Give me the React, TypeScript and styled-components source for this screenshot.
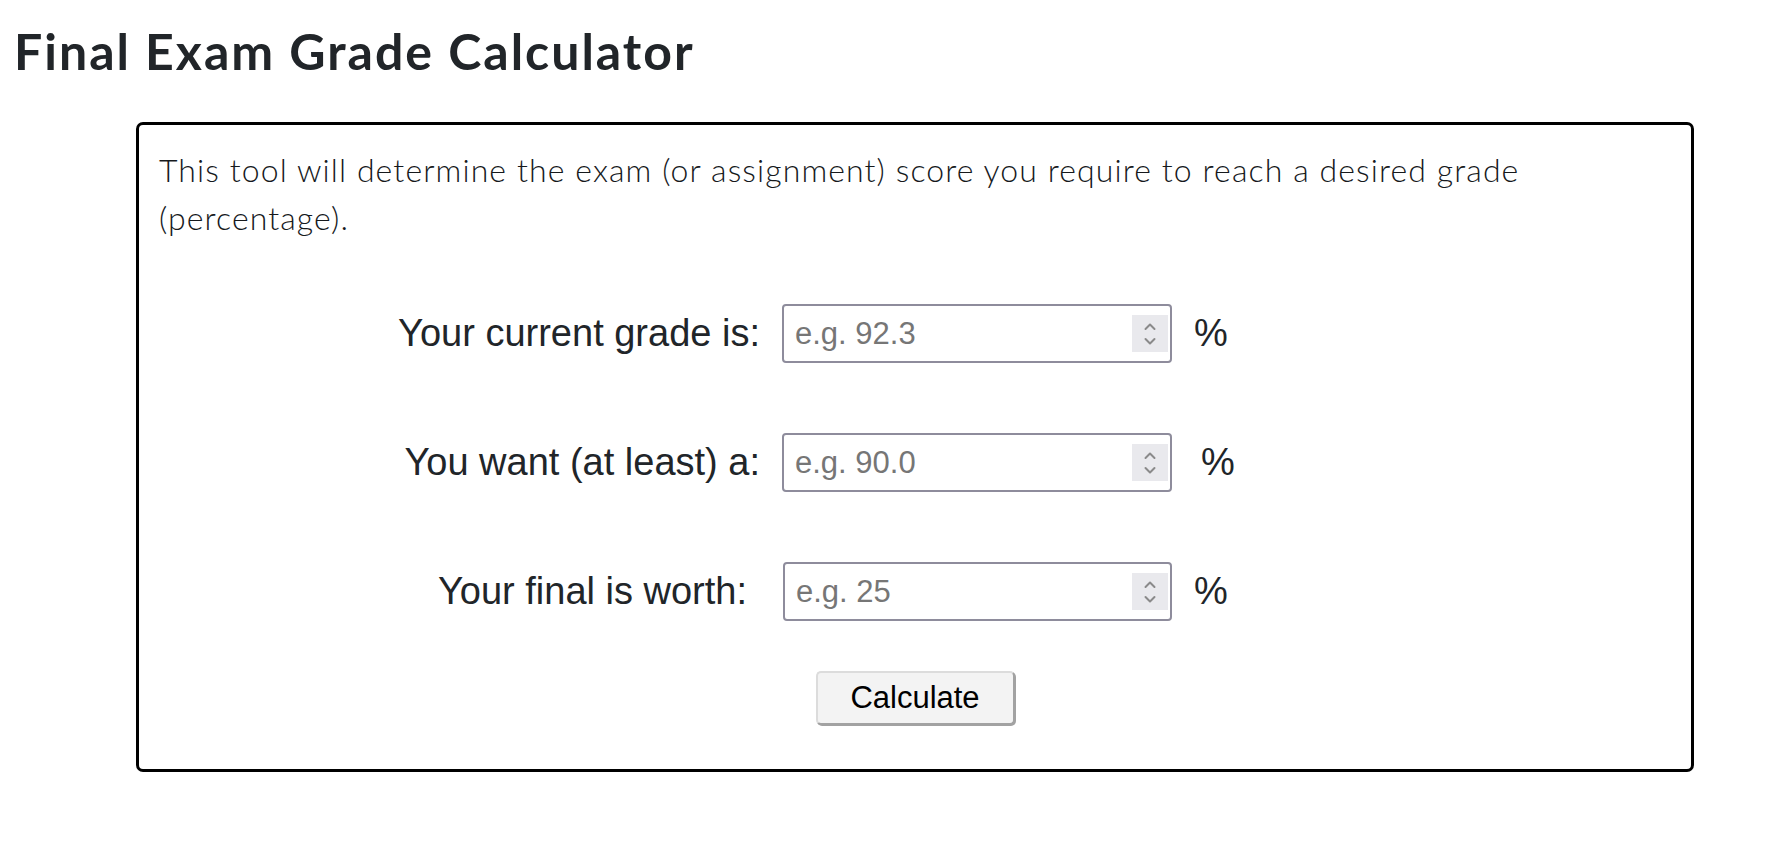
import React from "react";
import styled, { createGlobalStyle } from "styled-components";

const Global = createGlobalStyle`
  html, body { margin: 0; padding: 0; background: #ffffff; }
  body { font-family: "Liberation Sans", Arial, sans-serif; color: #212529; }
  * { box-sizing: border-box; }
`;

const Page = styled.div`
  width: 1778px;
  min-height: 842px;
  padding: 21px 84px 40px 14px;
`;

const Title = styled.h1`
  margin: 0;
  font-family: "Lato", "Liberation Sans", sans-serif;
  font-weight: 700;
  font-size: 50px;
  line-height: 1.2;
  letter-spacing: 2px;
  color: #212529;
`;

const Card = styled.section`
  margin: 41px 0 0 122px;
  border: 3px solid #000;
  border-radius: 7px;
  padding: 21px 20px 44px 20px;
  display: flex;
  flex-direction: column;
`;

const Intro = styled.p`
  margin: 0;
  font-family: "Lato", "Liberation Sans", sans-serif;
  font-weight: 300;
  font-size: 32px;
  line-height: 48px;
  letter-spacing: 1.1px;
  color: #16191c;
`;

const Form = styled.div`
  margin-top: 62px;
  margin-left: -20px;
  display: grid;
  grid-template-columns: 621px 390px auto;
  column-gap: 22px;
  row-gap: 70px;
  align-items: center;
`;

const Label = styled.label<{ $shift?: number }>`
  justify-self: end;
  padding-right: ${(p) => p.$shift ?? 0}px;
  font-family: "Liberation Sans", Arial, sans-serif;
  font-size: 38px;
  color: #212529;
  white-space: nowrap;
`;

const Field = styled.div<{ $nudge?: number }>`
  height: 59px;
  margin-left: ${(p) => p.$nudge ?? 0}px;
  border: 2px solid #8e8c9c;
  border-radius: 4px;
  background: #fff;
  display: flex;
  align-items: center;
  padding: 0 2px 0 11px;
`;

const TextInput = styled.input`
  flex: 1;
  min-width: 0;
  border: none;
  outline: none;
  background: transparent;
  font-family: "Liberation Sans", Arial, sans-serif;
  font-size: 31px;
  color: #212529;
  padding: 0;
  &::placeholder { color: #767676; }
`;

const Spinner = styled.span`
  width: 36px;
  height: 37px;
  background: #e9e9ed;
  display: flex;
  align-items: center;
  justify-content: center;
`;

const Unit = styled.span<{ $shift?: number }>`
  padding-left: ${(p) => p.$shift ?? 0}px;
  font-family: "Liberation Sans", Arial, sans-serif;
  font-size: 38px;
  color: #212529;
`;

const Actions = styled.div`
  margin-top: 50px;
  display: flex;
  justify-content: center;
`;

const Button = styled.button`
  width: 199px;
  height: 54px;
  background: #f3f3f3;
  border: 2px solid;
  border-color: #dcdcdc #a2a2a2 #a2a2a2 #dcdcdc;
  box-shadow: 1px 1px 0 #a2a2a2;
  border-radius: 5px;
  font-family: "Liberation Sans", Arial, sans-serif;
  font-size: 31px;
  color: #000;
  padding: 0;
  cursor: pointer;
`;

const Chevrons = () => (
  <svg width="16" height="28" viewBox="0 0 16 28" fill="none" stroke="#8a8a8a" strokeWidth="2" strokeLinecap="round" strokeLinejoin="round">
    <polyline points="3.5,9 8,4.5 12.5,9" />
    <polyline points="3.5,19 8,23.5 12.5,19" />
  </svg>
);

const rows = [
  { label: "Your current grade is:", placeholder: "e.g. 92.3", labelShift: 0, unitShift: 0, nudge: 0 },
  { label: "You want (at least) a:", placeholder: "e.g. 90.0", labelShift: 0, unitShift: 7, nudge: 0 },
  { label: "Your final is worth:", placeholder: "e.g. 25", labelShift: 13, unitShift: 0, nudge: 1 },
];

export default function App() {
  return (
    <>
      <Global />
      <Page>
        <Title>Final Exam Grade Calculator</Title>
        <Card>
          <Intro>
            This tool will determine the exam (or assignment) score you require to reach a desired grade (percentage).
          </Intro>
          <Form>
            {rows.map((r) => (
              <React.Fragment key={r.label}>
                <Label $shift={r.labelShift}>{r.label}</Label>
                <Field $nudge={r.nudge}>
                  <TextInput type="text" placeholder={r.placeholder} />
                  <Spinner>
                    <Chevrons />
                  </Spinner>
                </Field>
                <Unit $shift={r.unitShift}>%</Unit>
              </React.Fragment>
            ))}
          </Form>
          <Actions>
            <Button type="button">Calculate</Button>
          </Actions>
        </Card>
      </Page>
    </>
  );
}
